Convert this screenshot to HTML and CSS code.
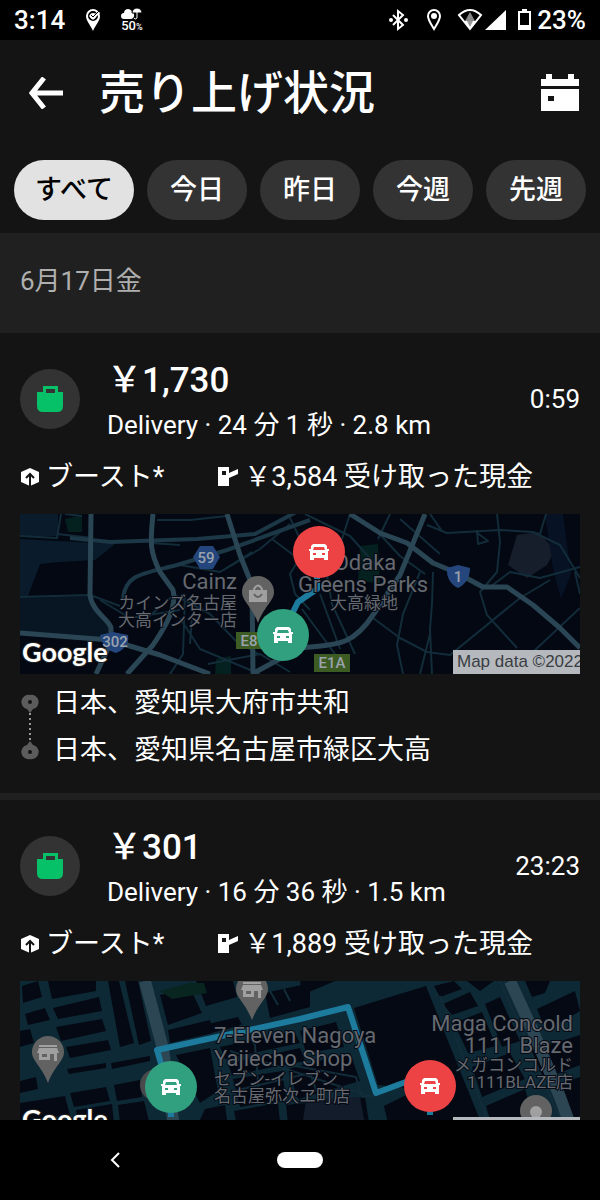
FILE: index.html
```
<!DOCTYPE html>
<html lang="ja">
<head>
    <meta charset="UTF-8">
    <meta name="viewport" content="width=device-width, initial-scale=1.0">
    <title>売り上げ状況</title>
    <link rel="stylesheet" href="styles.css">
</head>
<body>
    <!-- shared icons -->
    <svg class="icon-defs" aria-hidden="true">
        <symbol id="icon-bag" viewBox="0 0 26 26">
            <path fill-rule="evenodd" d="M6 0h15v6h5v14q0 6-6 6H6q-6 0-6-6V6h6zM9 3v4h9V3z"/>
        </symbol>
        <symbol id="icon-boost" viewBox="0 0 18 18">
            <path d="M9 0l9 4v10l-9 4-9-4V4z"/>
            <path d="M9 19V7M5 10l4-4 4 4" fill="none" stroke="#141414" stroke-width="2"/>
        </symbol>
        <symbol id="icon-cash" viewBox="0 0 20 20">
            <path fill-rule="evenodd" d="M0 0h11v6l9-4v5l-9 4v8H0zM4 4v4h4V4z"/>
        </symbol>
        <symbol id="icon-car" viewBox="0 0 20 17">
            <path fill-rule="evenodd" d="M4 0h12l2 2v3h2v2h-1v9h-4v-2H5v2H1V7H0V5h2V2zM5 3L4 6h12l-1-3zM4 9v2h3V9zM13 9v2h3V9z"/>
        </symbol>
        <symbol id="icon-store" viewBox="0 0 22 16">
            <path fill-rule="evenodd" d="M2 0h18v2H2zM2 3h18l2 5h-2v8h-3V9h-4v6H2V8H0zM5 9v3h5V9z"/>
        </symbol>
        <symbol id="icon-pin" viewBox="0 0 32 47">
            <path d="M16 0a16 16 0 0 1 16 16c0 9-9 13-16 31C9 29 0 25 0 16A16 16 0 0 1 16 0z"/>
        </symbol>
    </svg>

    <div class="status-bar">
        <div class="status-left">
            <span>3:14</span>
            <svg width="16" height="24" viewBox="0 0 16 24">
                <path d="M8 1a7 7 0 0 1 7 7c0 5-4 8-7 15C5 16 1 13 1 8a7 7 0 0 1 7-7z" fill="#fff"/>
                <circle cx="8" cy="8" r="4" fill="none" stroke="#000" stroke-width="2"/>
                <path d="M5 7l3 3 6-6" fill="none" stroke="#fff" stroke-width="3"/>
                <path d="M6 7l2 2 6-6" fill="none" stroke="#000" stroke-width="1"/>
            </svg>
            <div class="rain">
                <svg width="22" height="12" viewBox="0 0 22 12">
                    <path d="M3 11a3 3 0 0 1 0-6C3 1 9-1 11 4c3 0 3 7-1 7z" fill="#fff"/>
                    <path d="M11 5a5 5 0 0 1 10 0z" fill="#fff" stroke="#000"/>
                    <path d="M16 1v9q-2 2-3 0" fill="none" stroke="#fff" stroke-width="1"/>
                </svg>
                <span>50<small>%</small></span>
            </div>
        </div>
        <div class="status-right">
            <svg width="24" height="24" viewBox="0 0 24 24">
                <path d="M7 7l10 10-5 4V3l5 4L7 17" fill="none" stroke="#fff" stroke-width="2"/>
                <circle cx="5" cy="12" r="2" fill="#fff"/><circle cx="20" cy="12" r="2" fill="#fff"/>
            </svg>
            <svg width="23" height="24" viewBox="0 0 23 24">
                <path d="M12 2a6 6 0 0 1 6 6c0 4-3 8-6 13C9 16 6 12 6 8a6 6 0 0 1 6-6z" fill="none" stroke="#fff" stroke-width="2"/>
                <circle cx="12" cy="8" r="3" fill="#fff"/>
            </svg>
            <svg width="49" height="24" viewBox="0 0 49 24">
                <path d="M2 7q11-10 22 0L13 21z" fill="none" stroke="#fff" stroke-width="2"/>
                <path d="M13 4l5 9H8z" fill="#888"/>
                <path d="M7 13h12l-6 8z" fill="#fff"/>
                <path d="M10 13h6l-3 6z" fill="#999"/>
                <path d="M49 2v20H28z" fill="#fff"/>
            </svg>
            <span class="battery">
                <svg width="13" height="24" viewBox="0 0 13 24">
                    <path d="M4 1h5v2h4v19H0V3h4zM2 5v12h9V5z" fill="#fff" fill-rule="evenodd"/>
                </svg>
                23%
            </span>
        </div>
    </div>

    <header>
        <div class="title-row">
            <button class="icon-btn" aria-label="戻る">
                <svg width="34" height="32" viewBox="0 0 34 32">
                    <path d="M34 16H4M15 1L3 16l12 15" fill="none" stroke="#fff" stroke-width="5"/>
                </svg>
            </button>
            <h1>売り上げ状況</h1>
            <button class="icon-btn" aria-label="カレンダー">
                <svg width="38" height="38" viewBox="0 0 38 38">
                    <path d="M0 5h5V0h6v5h16V0h6v5h5v7H0zM0 15h38v22H0zM7 22v5h6v-5z" fill="#fff" fill-rule="evenodd"/>
                </svg>
            </button>
        </div>
        <nav class="filters">
            <button class="chip active">すべて</button>
            <button class="chip">今日</button>
            <button class="chip">昨日</button>
            <button class="chip">今週</button>
            <button class="chip">先週</button>
        </nav>
    </header>

    <main>
        <h2 class="date">6月17日金</h2>

        <article class="trip">
            <div class="summary">
                <div class="avatar"><svg width="26" height="26"><use href="#icon-bag"/></svg></div>
                <div class="info">
                    <div class="amount">&#xFFE5;1,730</div>
                    <div>Delivery · 24 分 1 秒 · 2.8 km</div>
                </div>
                <time>0:59</time>
            </div>
            <div class="tags">
                <span class="tag"><svg width="20" height="18"><use href="#icon-boost"/></svg>ブースト*</span>
                <span class="tag"><svg width="20" height="20"><use href="#icon-cash"/></svg>&#xFFE5;3,584 受け取った現金</span>
            </div>
            <svg class="map" viewBox="0 0 560 160">
                <rect width="560" height="160" fill="#030812"/>
                <!-- areas -->
                <path d="M0 0H38V22H0zM0 25L95 30 75 46 40 48 20 50 8 82 0 84z" fill="#0a1c2b"/>
                <path d="M0 84L70 82 90 110 90 125 0 118z" fill="#081522"/>
                <path d="M45 5l17-4v17H48zM340 32l18-2 2 40-22-4zM196 145l15-3v18h-16z" fill="#04201f"/>
                <path d="M497 21L518 18 535 36 527 51 507 64 488 51z" fill="#171e2b"/>
                <path d="M525 0h18l8 60-10 25-8-30z" fill="#071225"/>
                <g class="road-thin">
                    <path d="M0 22L37 24 41 0M38 20L72 24M0 83L70 81 100 92M45 0L62 2"/>
                    <path d="M137 6L170 6 207 2M131 29L160 31M160 51L200 58 240 35 270 10M200 58L232 38M268 0L285 35 270 60 275 80 290 96M252 25L280 46"/>
                    <path d="M153 80L190 100 216 127 240 141M165 80L163 140 150 160M160 104L180 135 240 160M80 86L110 104 160 96M172 103L170 130M120 110L155 80M188 150L240 140 270 158"/>
                    <path d="M330 0L322 25 305 50 312 90 335 140M285 0L330 22 355 50M355 15L380 42 405 60M370 0L358 25M407 11L427 19 480 16 513 18 540 31 560 64M477 0L480 28 477 58 460 78 467 101 497 134M380 5L420 40M410 0L422 17"/>
                    <path d="M560 53L520 64 490 58 470 73M413 58L412 90 410 115 412 160M400 58L383 100 377 131 383 160M353 104L380 124 407 138 430 141 500 84 530 66M560 94L513 138M457 16L458 30 468 27 456 18M410 120L400 160M520 20L526 0M555 58L560 80M282 95L315 140M300 80L320 135"/>
                </g>
                <g class="road-mid">
                    <path d="M50 24L90 28 177 25 235 20 280 -4"/>
                    <path d="M103 84C106 60 122 60 157 51L207 36 290 6"/>
                </g>
                <g class="road">
                    <path d="M71 0L70 81C72 98 90 106 91 114V128L76 160"/>
                    <path d="M133 0C130 30 130 38 140 58L153 76 C158 96 140 120 133 131L107 160"/>
                    <path d="M207 0L220 41 232 71 233 160"/>
                    <path d="M0 119L90 126 140 141 190 160"/>
                    <path d="M405 0L380 61 353 101C330 136 310 130 280 134L232 160"/>
                    <path d="M330 0L360 19 387 29 413 49 437 59 463 73 487 73 513 91 540 114 560 134"/>
                </g>
                <path d="M268 108L278 88 297 75V50" class="route"/>
                <!-- road shields -->
                <path d="M180 32h13l7 11-7 12h-13l-7-12z" fill="#24467c"/>
                <path d="M80 121l13-3 15 3q2 12-12 18-14-4-16-18z" fill="#24467c"/>
                <path d="M427 54l11-3 12 3q0 14-12 20-12-6-11-20z" fill="#24467c"/>
                <path d="M216 118h30v17h-30zM294 140h36v18h-36z" fill="#3d5c24"/>
                <g class="shield" text-anchor="middle">
                    <text x="186" y="49">59</text>
                    <text x="95" y="133">302</text>
                    <text x="438" y="68">1</text>
                    <text x="229" y="132">E8</text>
                    <text x="312" y="154">E1A</text>
                </g>
                <use href="#icon-pin" x="222" y="62" width="32" height="47" fill="#626262"/>
                <path d="M229 76h18v12h-18z" fill="#a0a0a0"/>
                <path d="M234 77v-2q4-7 8 0v2" fill="none" stroke="#a0a0a0" stroke-width="2"/>
                <path d="M234 80q4 6 8 0" fill="none" stroke="#626262" stroke-width="2"/>
                <g class="place" text-anchor="end">
                    <text x="217" y="75">Cainz</text>
                    <text x="217" y="95" class="jp">カインズ名古屋</text>
                    <text x="217" y="112" class="jp">大高インター店</text>
                </g>
                <g class="place" text-anchor="middle">
                    <text x="345" y="56">Odaka</text>
                    <text x="343" y="78">Greens Parks</text>
                    <text x="344" y="95" class="jp">大高緑地</text>
                </g>
                <circle cx="299" cy="38" r="26" fill="#ee4345"/>
                <use href="#icon-car" x="289" y="30" width="20" height="17" fill="#fff"/>
                <circle cx="263" cy="121" r="26" fill="#31a07e"/>
                <use href="#icon-car" x="253" y="113" width="20" height="17" fill="#fff"/>
                <text x="2" y="148" class="google">Google</text>
                <rect x="433" y="136" width="127" height="24" fill="#b5b9be"/>
                <text x="437" y="153" class="credit">Map data ©2022</text>
            </svg>
            <div class="places">
                <svg width="20" height="94" viewBox="0 0 20 94">
                    <path d="M10 33v30" stroke="#999" stroke-width="2" stroke-dasharray="2 3"/>
                    <path d="M10 15a7 7 0 0 1 3 14l-3 4-3-4a7 7 0 0 1 3-14zM10 79a7 7 0 0 0 3-14l-3-4-3 4a7 7 0 0 0 3 14z" fill="#5c5c5c"/>
                    <circle cx="10" cy="22" r="2" fill="#141414"/><circle cx="10" cy="72" r="2" fill="#141414"/>
                </svg>
                <ul>
                    <li>日本、愛知県大府市共和</li>
                    <li>日本、愛知県名古屋市緑区大高</li>
                </ul>
            </div>
        </article>

        <article class="trip">
            <div class="summary">
                <div class="avatar"><svg width="26" height="26"><use href="#icon-bag"/></svg></div>
                <div class="info">
                    <div class="amount">&#xFFE5;301</div>
                    <div>Delivery · 16 分 36 秒 · 1.5 km</div>
                </div>
                <time>23:23</time>
            </div>
            <div class="tags">
                <span class="tag"><svg width="20" height="18"><use href="#icon-boost"/></svg>ブースト*</span>
                <span class="tag"><svg width="20" height="20"><use href="#icon-cash"/></svg>&#xFFE5;1,889 受け取った現金</span>
            </div>
            <svg class="map" viewBox="0 0 560 160">
                <rect width="560" height="160" fill="#0e2936"/>
                <!-- city blocks -->
                <g fill="#040914">
                    <path d="M2 5L18 0 22 16 3 22zM28 0H76V10L32 18zM5 33L25 27 30 39 8 44zM33 27L79 16 82 30 38 38zM36 46L82 38 86 50 41 60zM46 66L88 59 91 69 50 77zM0 50L10 48 14 62 0 66z"/>
                    <path d="M88 0H99L114 62 100 66zM105 0H118L131 60 119 64zM140 14L170 7 182 32 148 44zM148 49L190 39 193 52 150 62zM176 0H213L217 16 186 25zM245 12L290 2V26L250 37zM188 43L218 36 222 44 191 52z"/>
                    <path d="M47 88L86 82V87L49 93zM91 82L130 75V80L92 88zM0 100L16 96 18 108 0 112zM50 112L86 106 90 120 54 126zM94 104L120 99 122 116 97 120zM56 129L92 123 96 160H60zM98 124L124 120 134 160H102zM0 122L45 115 50 134 0 140z"/>
                    <path d="M156 74L190 67 198 110 180 122zM200 66L274 50 280 62 205 78zM208 83L280 67 285 80 212 94zM213 98L262 90 266 118 220 126zM268 88L330 72 340 100 278 118zM185 128L205 124 210 160H170zM214 130L258 122 262 160H220zM280 50L316 41 324 66 286 72zM280 0H315L282 14z"/>
                    <path d="M334 27L406 5 428 60 460 139 470 160H372L364 125 398 108 358 104zM266 124L345 116 352 160H270zM414 5L434 0 442 8 420 16zM423 23L450 11 458 25 432 34zM447 0H474L460 10zM434 42L462 31 476 65 448 72zM465 23L480 16 500 60 482 66z"/>
                    <path d="M505 0H530L525 12 512 16zM517 28L555 10 560 30 526 50zM452 86L490 72 505 98 462 116zM510 70L560 54V84L524 98zM466 125L505 108 516 145 475 155zM532 105L560 96V135L546 145z"/>
                </g>
                <path d="M140 10l30-8 14 0 3 10-35 6z" fill="#08251f"/>
                <path d="M286 119L340 116 348 160H280z" fill="#121c2b"/>
                <g class="road-thin">
                    <path d="M210 70L350 115M205 112L290 92 300 120M220 44L235 64 240 125M275 85L336 96 342 116 358 114M420 15L470 145M250 10L258 24M264 8L270 20M480 0L550 160"/>
                </g>
                <path d="M125 0L143 68 156 160" class="highway"/>
                <path d="M490 0L513 50 540 116 556 160" class="highway"/>
                <path d="M150 110L142 86 137 69 280 38 328 26 356 112 402 95M151 110V136M410 110V134" class="route"/>
                <circle cx="136" cy="104" r="16" fill="#4a4a4d"/>
                <g fill="#626262">
                    <use href="#icon-pin" x="12" y="55" width="32" height="47"/>
                    <use href="#icon-pin" x="216" y="-8" width="32" height="47"/>
                    <use href="#icon-pin" x="500" y="114" width="32" height="47"/>
                </g>
                <g fill="#a0a0a0">
                    <use href="#icon-store" x="17" y="64" width="22" height="16"/>
                    <use href="#icon-store" x="221" y="1" width="22" height="16"/>
                    <circle cx="516" cy="131" r="6"/>
                </g>
                <g class="place">
                    <text x="194" y="62">7-Eleven Nagoya</text>
                    <text x="194" y="85">Yajiecho Shop</text>
                    <text x="194" y="104" class="jp">セブン-イレブン</text>
                    <text x="194" y="121" class="jp">名古屋弥次ヱ町店</text>
                </g>
                <g class="place" text-anchor="end">
                    <text x="553" y="50">Maga Concold</text>
                    <text x="553" y="72">1111 Blaze</text>
                    <text x="553" y="90" class="jp">メガコンコルド</text>
                    <text x="553" y="107" class="jp">1111BLAZE店</text>
                </g>
                <circle cx="151" cy="106" r="26" fill="#31a07e"/>
                <use href="#icon-car" x="141" y="98" width="20" height="17" fill="#fff"/>
                <circle cx="410" cy="105" r="26" fill="#ee4345"/>
                <use href="#icon-car" x="400" y="97" width="20" height="17" fill="#fff"/>
                <text x="2" y="148" class="google">Google</text>
                <rect x="433" y="136" width="127" height="24" fill="#b5b9be"/>
            </svg>
        </article>
    </main>

    <footer>
        <button class="nav-back" aria-label="戻る">
            <svg width="12" height="18" viewBox="0 0 12 18">
                <path d="M10 2L3 9l7 7" fill="none" stroke="#fff" stroke-width="2"/>
            </svg>
        </button>
        <button class="nav-home" aria-label="ホーム"></button>
    </footer>
</body>
</html>
```
FILE: styles.css
```
* {
    box-sizing: border-box;
}

body {
    display: flex;
    flex-direction: column;
    height: 100vh;
    margin: 0;
    background-color: #141414;
    color: #fff;
    font-family: Roboto, "Noto Sans CJK JP", sans-serif;
    font-size: 26px;
}

button {
    padding: 0;
    border: none;
    background: none;
    color: inherit;
    font: inherit;
    cursor: pointer;
}

svg {
    display: block;
    flex: none;
}

.icon-defs {
    position: absolute;
    width: 0;
    height: 0;
}

/* status bar */
.status-bar {
    display: flex;
    flex: none;
    justify-content: space-between;
    height: 40px;
    padding: 0 14px;
    background-color: #000;
    font-weight: 500;
}

.status-left,
.status-right {
    display: flex;
    align-items: center;
    gap: 12px;
}

.status-left {
    gap: 20px;
}

.battery {
    display: flex;
    align-items: center;
    gap: 6px;
}

.rain {
    font-size: 13px;
    line-height: 12px;
}

.rain small {
    font-size: 9px;
}

/* header */
header {
    flex: none;
}

.title-row {
    display: flex;
    align-items: center;
    height: 106px;
    padding: 0 21px 0 29px;
}

h1 {
    flex: 1;
    margin: 0 0 0 36px;
    font-size: 46px;
    font-weight: 500;
    line-height: 60px;
}

.filters {
    display: flex;
    gap: 13px;
    padding: 14px 14px 13px;
    overflow: hidden;
}

.chip {
    flex: none;
    min-width: 100px;
    height: 60px;
    border-radius: 30px;
    background-color: #333;
    font-size: 27px;
    font-weight: 500;
    line-height: 60px;
}

.chip.active {
    min-width: 120px;
    background-color: #e2e2e2;
    color: #000;
}

/* trips */
main {
    flex: 1;
    min-height: 0;
    overflow: hidden;
}

.date {
    margin: 0;
    padding: 0 20px 4px;
    background-color: #202020;
    color: #afafaf;
    font-size: 26px;
    font-weight: 400;
    line-height: 96px;
}

.trip {
    padding: 18px 20px 19px;
    border-bottom: 7px solid #202020;
}

.summary {
    display: flex;
    align-items: center;
    gap: 27px;
}

.avatar {
    display: flex;
    align-items: center;
    justify-content: center;
    width: 60px;
    height: 60px;
    border-radius: 50%;
    background-color: #333;
    fill: #06c167;
}

.info {
    flex: 1;
    padding-top: 8px;
    line-height: 44px;
}

.amount {
    font-size: 35px;
    font-weight: 500;
}

.tags {
    display: flex;
    gap: 54px;
    font-size: 27px;
    line-height: 60px;
    white-space: nowrap;
}

.tag {
    display: flex;
    align-items: center;
    gap: 6px;
    fill: #fff;
}

.map {
    width: 100%;
    height: auto;
    margin-top: 7px;
}

.places {
    display: flex;
    gap: 13px;
    padding-top: 6px;
    font-size: 27px;
    line-height: 47px;
}

.places ul {
    margin: 0;
    padding: 0;
    list-style: none;
}

/* map drawing */
.road-thin,
.road-mid,
.road,
.highway,
.route {
    fill: none;
    stroke-linejoin: round;
}

.road-thin {
    stroke: #122c39;
    stroke-width: 2;
}

.road-mid {
    stroke: #1c3846;
    stroke-width: 4;
}

.road {
    stroke: #2a4655;
    stroke-width: 5;
}

.highway {
    stroke: #2d4654;
    stroke-width: 12;
}

.route {
    stroke: #1d7b9e;
    stroke-width: 6;
}

.place {
    fill: #666a70;
    stroke: #040914;
    stroke-width: 2px;
    paint-order: stroke;
    font-size: 22px;
}

.place .jp {
    font-size: 17px;
}

.shield {
    fill: #9aa3ad;
    font-size: 15px;
    font-weight: 500;
}

.google {
    fill: #fff;
    stroke: #222;
    stroke-width: 2px;
    paint-order: stroke;
    font-family: Lato, sans-serif;
    font-size: 27px;
    font-weight: 700;
}

.credit {
    fill: #3a3d42;
    font-family: "Liberation Sans", sans-serif;
    font-size: 17px;
}

/* system navigation */
footer {
    display: grid;
    flex: none;
    grid-template-columns: 23fr 14fr 23fr;
    align-items: center;
    justify-items: center;
    height: 80px;
    background-color: #000;
}

.nav-home {
    width: 46px;
    height: 16px;
    border-radius: 8px;
    background-color: #fff;
}
```
